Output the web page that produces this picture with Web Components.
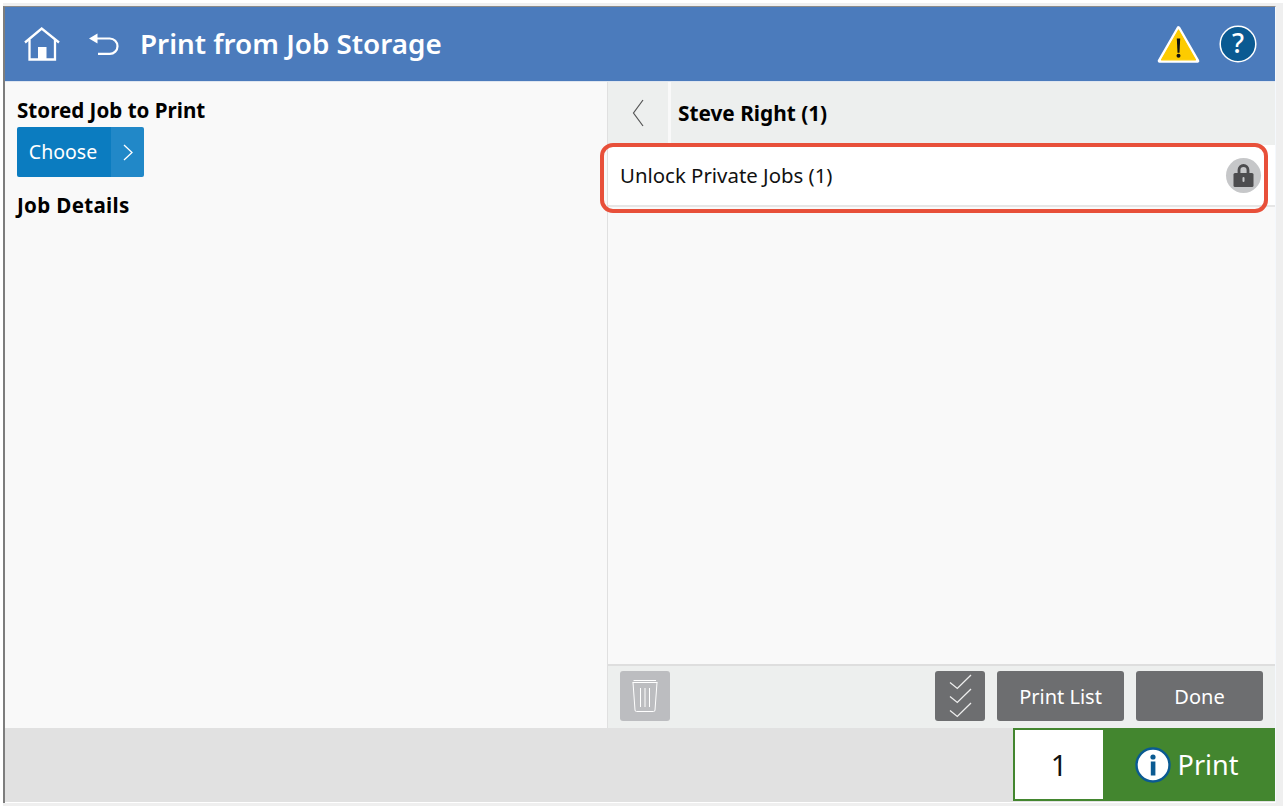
<!DOCTYPE html>
<html lang="en"><head><meta charset="utf-8"><title>Print from Job Storage</title>
<style>
html,body{margin:0;padding:0;background:#fff;height:809px;overflow:hidden}
body{font-family:"Noto Sans","Open Sans",sans-serif}
</style></head><body>
<panel-app>
  <top-bar slot="top" heading="Print from Job Storage"></top-bar>
  <left-pane slot="left"></left-pane>
  <right-pane slot="right"></right-pane>
  <bottom-bar slot="bottom"></bottom-bar>
</panel-app>
<script>
const def=(name,html)=>customElements.define(name,class extends HTMLElement{
  constructor(){super();this.attachShadow({mode:'open'}).innerHTML=typeof html==='function'?html(this):html;}
});
def('panel-app',`<style>
:host{display:block;width:1286px;height:809px;box-sizing:border-box;padding-top:3px}
.bezel{background:#efefef;margin-left:3px;width:1280px;height:803px;box-sizing:border-box;padding:3px 7px 3px 0}
.screen{width:1273px;height:797px;display:grid;grid-template-rows:75px 646px 75px;border-top:1px solid #8a8a8a;border-left:2px solid #7d7d7d;border-right:1px solid #f4f8fd;box-sizing:border-box;background:#f9f9f9}
.mid{display:grid;grid-template-columns:602px 668px;min-height:0}
.foot{border-bottom:1px solid #fff;min-height:0}
</style><div class="bezel"><div class="screen"><slot name="top"></slot><div class="mid"><slot name="left"></slot><slot name="right"></slot></div><div class="foot"><slot name="bottom"></slot></div></div></div>`);
def('top-bar',h=>`<style>
:host{display:flex;align-items:center;background:#4b7bbc;color:#fff;height:74px;border-bottom:1px solid #dfe6f0;padding-left:19px;padding-right:18px}
h1{font:600 27.800px/1 "Noto Sans","Open Sans",sans-serif;margin:0 0 0 21px;flex:1}
svg{display:block;flex:none}
.back{margin-left:28px}
.warn{margin-right:19px}
</style>
<svg class="home" width="36" height="34" viewBox="0 0 36 34" fill="none" stroke="#fff" stroke-width="2.300"><path d="M1 15.500 17.700 1.500 35 15.500"/><path d="M5.500 12.500V32.500H31V12.500"/><rect x="14" y="20" width="8.500" height="13" fill="#fff" stroke="none"/></svg>
<svg class="back" width="31" height="25" viewBox="0 0 31 25" fill="none" stroke="#fff" stroke-width="2.200"><path d="M1 6.500 9.500 1.500v10z" fill="#fff" stroke="none"/><path d="M9 6.500H21.800a7.700 7.700 0 0 1 0 15.400H10"/></svg>
<h1>${h.getAttribute('heading')}</h1>
<svg class="warn" width="43" height="39" viewBox="0 0 43 39"><path d="M21.500 3 40.500 36H2.500z" fill="#fdcb00" stroke="#fff" stroke-width="3.600" stroke-linejoin="round"/><path d="M21.500 5 38.500 34.800H4.500z" fill="#fdcb00" stroke="#fdcb00" stroke-width="1.200" stroke-linejoin="round"/><path d="M19.800 13.500h3.400l-.7 14.300h-2z" fill="#111"/><circle cx="21.500" cy="30.800" r="2" fill="#111"/></svg>
<svg width="38" height="38" viewBox="0 0 38 38"><circle cx="19" cy="19" r="17.800" fill="#0a5a92" stroke="#fff" stroke-width="1.500"/><text x="19" y="28" text-anchor="middle" font-family="Noto Sans,sans-serif" font-size="27" font-weight="500" fill="#fff">?</text></svg>`);
def('left-pane',`<style>
:host{display:block;background:#f9f9f9;padding:14px 0 0 12px;color:#000}
h2{font-size:20.600px;line-height:28px;font-weight:700;margin:0}
h2.j{letter-spacing:.3px}
.btn{display:flex;width:127px;height:50px;border-radius:2px;overflow:hidden;color:#fff;margin:3px 0 14px}
.a{width:94px;background:#0b7cc0;font-size:19.500px;line-height:49px;text-align:center;padding-right:2px;box-sizing:border-box}
.b{width:33px;background:#2188c8;display:flex;align-items:center;justify-content:center}
</style><h2>Stored Job to Print</h2><div class="btn"><div class="a">Choose</div><div class="b"><svg width="10" height="17" viewBox="0 0 10 17" fill="none" stroke="#fff" stroke-width="1.300"><path d="M1 1 9 8.500 1 16"/></svg></div></div><h2 class="j">Job Details</h2>`);
def('right-pane',`<style>
:host{display:flex;flex-direction:column;background:#f9f9f9;border-left:1px solid #e0e0e0;box-sizing:border-box;min-height:0}
.head{height:63px;background:#edefee;display:flex;align-items:center;flex:none}
.chev{width:63px;height:63px;border-right:3px solid #f9f9f9;display:flex;align-items:center;justify-content:center;box-sizing:border-box;padding-bottom:2px}
.t{font-size:20.800px;font-weight:700;padding:0 0 2px 7px;color:#000}
.list{flex:1;position:relative;min-height:0}
.row{height:62px;background:#fff;border-bottom:2px solid #e6e6e6;display:flex;align-items:center;justify-content:space-between;padding:0 14px 0 12px;font-size:20.400px;color:#111;box-sizing:border-box}
.ring{position:absolute;left:-8px;top:-2px;width:668px;height:70px;box-sizing:border-box;border:4px solid #e8503a;border-radius:13px;pointer-events:none}
.lock{width:35px;height:35px;border-radius:50%;background:#c6c7c9;display:flex;align-items:center;justify-content:center}
.tools{height:64px;background:#edefee;border-top:2px solid #dedede;box-sizing:border-box;display:flex;align-items:center;padding:0 12px 2px 12px;gap:12px;flex:none}
.ic,.tb{height:50px;border-radius:3px;background:#6d6e70;color:#fff;display:flex;align-items:center;justify-content:center;box-sizing:border-box;font-size:20px}
.ic{width:50px}.trash{background:#bcbdc0;margin-right:auto}
.tb{width:127px}
</style>
<div class="head"><div class="chev"><svg width="12" height="28" viewBox="0 0 12 28" fill="none" stroke="#555" stroke-width="1.200"><path d="M11 1 1.500 14 11 27"/></svg></div><div class="t">Steve Right (1)</div></div>
<div class="list"><div class="row"><span>Unlock Private Jobs (1)</span><span class="lock"><svg width="21" height="24" viewBox="0 0 21 24"><path d="M6 11V7a4.500 4.500 0 0 1 9 0v4" fill="none" stroke="#4d4d4f" stroke-width="2.800"/><rect x="0.500" y="10" width="20" height="14" rx="1.500" fill="#4d4d4f"/><rect x="9.500" y="14" width="2" height="5" rx="1" fill="#c6c7c9"/></svg></span></div><div class="ring"></div></div>
<div class="tools">
<div class="ic trash"><svg width="26" height="34" viewBox="0 0 26 34" fill="none" stroke="#fff" stroke-width="1"><path d="M1.500 1.500H24M.5 3.500H25.500M1 3.500 3 31a1.500 1.500 0 0 0 1.500 1.500h17A1.500 1.500 0 0 0 23 31L25 3.500"/><path d="M8.500 9V28M13 9V28M17.500 9V28"/></svg></div>
<div class="ic"><svg width="23" height="44" viewBox="0 0 23 44" fill="none" stroke="#eee" stroke-width="1.300"><path d="M1 8.500 8.300 14.500 22 1M1 22.500 8.300 28.500 22 15M1 36.500 8.300 42.500 22 29"/></svg></div>
<div class="tb">Print List</div><div class="tb">Done</div>
</div>`);
def('bottom-bar',`<style>
:host{display:flex;justify-content:flex-end;align-items:flex-start;background:#e1e1e1;height:74px}
.num{width:90px;height:73px;box-sizing:border-box;border:2px solid #43862f;border-right:0;background:#fff;display:flex;align-items:center;justify-content:center;font-size:29px;color:#111;padding:0 0 1px 0}
.go{width:172px;height:73px;background:#43862f;color:#fff;display:flex;align-items:center;justify-content:center;gap:7px;font-size:27px;padding:0 5px 0 0;box-sizing:border-box}
svg{display:block}
</style><div class="num">1</div><div class="go"><svg width="36" height="36" viewBox="0 0 36 36"><circle cx="18" cy="18" r="16.500" fill="#fff" stroke="#0a5a92" stroke-width="2.400"/><circle cx="18" cy="10" r="2.600" fill="#0a5a92"/><rect x="15.800" y="14.500" width="4.600" height="14" fill="#0a5a92"/></svg><span>Print</span></div>`);
</script></body></html>
